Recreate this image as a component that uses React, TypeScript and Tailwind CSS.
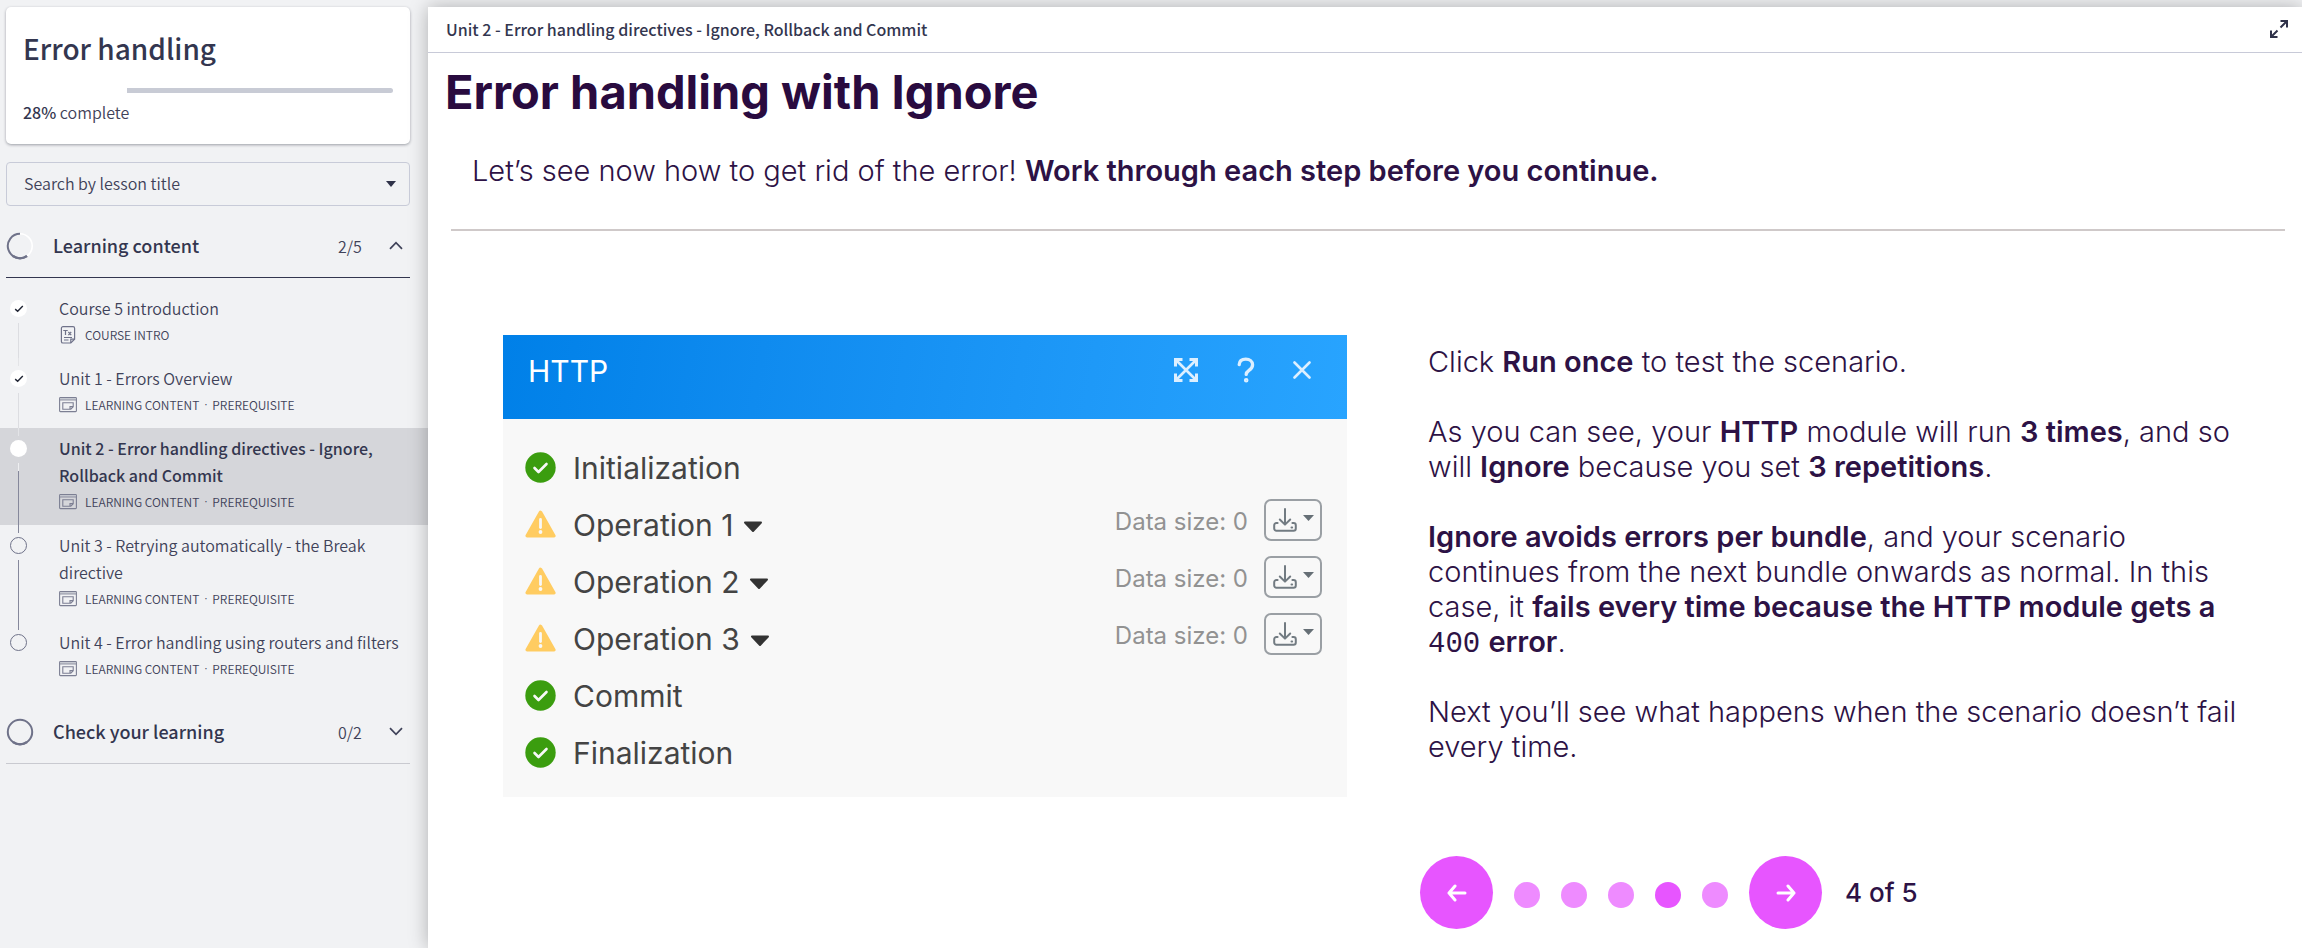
import React from "react";

type Status = "done" | "current" | "todo";

interface Lesson {
  title: string;
  meta: string[];
  icon: "text" | "content";
  status: Status;
}

const lessons: Lesson[] = [
  { title: "Course 5 introduction", meta: ["COURSE INTRO"], icon: "text", status: "done" },
  { title: "Unit 1 - Errors Overview", meta: ["LEARNING CONTENT", "PREREQUISITE"], icon: "content", status: "done" },
  {
    title: "Unit 2 - Error handling directives - Ignore, Rollback and Commit",
    meta: ["LEARNING CONTENT", "PREREQUISITE"],
    icon: "content",
    status: "current",
  },
  {
    title: "Unit 3 - Retrying automatically - the Break directive",
    meta: ["LEARNING CONTENT", "PREREQUISITE"],
    icon: "content",
    status: "todo",
  },
  {
    title: "Unit 4 - Error handling using routers and filters",
    meta: ["LEARNING CONTENT", "PREREQUISITE"],
    icon: "content",
    status: "todo",
  },
];

const operations = [
  { name: "Initialization", ok: true },
  { name: "Operation 1", ok: false },
  { name: "Operation 2", ok: false },
  { name: "Operation 3", ok: false },
  { name: "Commit", ok: true },
  { name: "Finalization", ok: true },
];

function TextIcon() {
  return (
    <svg width="18" height="20" viewBox="0 0 18 20" fill="none" stroke="#6f7289" strokeWidth="1.2">
      <path d="M4 1.6h10a1.6 1.6 0 0 1 1.6 1.6v11l-3.8 3.8H4a1.6 1.6 0 0 1-1.6-1.6V3.2A1.6 1.6 0 0 1 4 1.6Z" />
      <path d="M11.8 18v-3.800h3.800M5 12.500h8M5 15h4.500" />
      <path d="M4.300 5.500h4.400M6.500 5.500v4.500M9.400 7l2.800 3.200M12.200 7l-2.800 3.200" />
    </svg>
  );
}

function ContentIcon() {
  return (
    <svg width="18" height="16" viewBox="0 0 18 16" fill="none" stroke="#7c7f93" strokeWidth="1.100">
      <rect x="0.600" y="0.600" width="16.800" height="14" rx="0.800" />
      <path d="M1 1.200h16v1.600H1z" fill="#c4c6cf" stroke="none" />
      <path d="M1 3h16" strokeWidth="0.800" />
      <path d="M3.800 5.800h10.400v4l-2.400 2.400h-8zM11 12.200v-2.600h3.200" />
    </svg>
  );
}

function Marker({ status }: { status: Status }) {
  if (status === "todo") {
    return <span className="h-[17px] w-[17px] shrink-0 rounded-full border border-[#6f7289]" />;
  }
  return (
    <span className="flex h-[17px] w-[17px] shrink-0 items-center justify-center rounded-full bg-white">
      {status === "done" && (
        <svg width="10" height="8" viewBox="0 0 11 9" fill="none" stroke="#1f2433" strokeWidth="1.600">
          <path d="M1.200 4.600 4 7 9.800 1.200" />
        </svg>
      )}
    </span>
  );
}

function LessonRow({ lesson, index }: { lesson: Lesson; index: number }) {
  const first = index === 0;
  const last = index === lessons.length - 1;
  const current = lesson.status === "current";
  const before = first ? "bg-transparent" : lesson.status === "todo" ? "bg-[#85889b]" : "bg-[#e3e4e7]";
  const after = last ? "bg-transparent" : lesson.status === "done" ? "bg-[#dcdde1]" : "bg-[#85889b]";
  return (
    <li className={current ? "bg-[#d5d6da]" : ""}>
      <a href="#lesson" aria-current={current ? "page" : undefined} className="flex pl-[10px]">
        <span className="flex w-[17px] shrink-0 flex-col items-center">
          <span className={`mb-1 h-2 w-px shrink-0 ${before}`} />
          <Marker status={lesson.status} />
          {current && <span className="mt-[6px] h-2 w-px bg-[#eeeff1]" />}
          <span className={`w-px flex-1 ${current ? "" : "mt-[6px]"} ${after}`} />
        </span>
        <span className="ml-8 flex min-w-0 flex-1 flex-col pt-[7px] pr-6 pb-[10px]">
          <span
            className={`text-[16px] leading-[27px] ${current ? "font-medium text-[#33364f]" : "font-[350] text-[#3f4259]"}`}
          >
            {lesson.title}
          </span>
          <span className="flex h-[26px] items-center text-[12px] font-[350] text-[#3f4259]">
            <span className="flex w-[26px] shrink-0">{lesson.icon === "text" ? <TextIcon /> : <ContentIcon />}</span>
            {lesson.meta.map((part, i) => (
              <React.Fragment key={part}>
                {i > 0 && <span className="w-[13px] text-center font-['Inter',sans-serif]">·</span>}
                <span>{part}</span>
              </React.Fragment>
            ))}
          </span>
        </span>
      </a>
    </li>
  );
}

function SectionHeader({ title, count, open }: { title: string; count: string; open: boolean }) {
  return (
    <button
      type="button"
      aria-expanded={open}
      className={`mr-[18px] ml-[6px] flex h-16 items-center border-b text-left ${open ? "border-[#33364f]" : "border-[#c9cad0]"}`}
    >
      <svg width="28" height="28" viewBox="0 0 28 28" fill="none">
        <circle cx="14" cy="14" r="12.200" stroke={open ? "#ffffff" : "#6f7289"} strokeWidth={open ? 1.6 : 2} />
        {open ? <path d="M14 1.800A12.200 12.200 0 1 0 21 24" stroke="#6f7289" strokeWidth="2" /> : null}
        <path d="M7 24a12.200 12.200 0 0 0 14 0" stroke="#6f7289" strokeWidth="2.600" />
      </svg>
      <span className="ml-[19px] flex-1 text-[18px] font-medium text-[#33364f]">{title}</span>
      <span className="w-[51px] text-[16px] font-[350] text-[#3f4259]">{count}</span>
      <svg width="14" height="9" viewBox="0 0 14 9" fill="none" stroke="#3f4259" strokeWidth="1.700" className="mr-[7px]">
        <path d={open ? "M1 7.800 7 1.600l6 6.200" : "M1 1.200 7 7.400l6-6.200"} />
      </svg>
    </button>
  );
}

function Sidebar() {
  return (
    <nav className="flex w-[428px] shrink-0 flex-col pt-[7px] font-['Noto_Sans_CJK_SC','Source_Sans_3',sans-serif]">
      <section className="mr-[18px] ml-[6px] h-[137px] rounded-[5px] bg-white px-[17px] pt-5 shadow-[0_1px_3px_rgba(30,34,50,0.4)]">
        <h1 className="text-[28px] leading-[42px] font-medium text-[#33364f]">Error handling</h1>
        <div className="mt-[19px] flex h-[5px]">
          <div className="w-[28%]" />
          <div className="flex-1 rounded-r-[3px] bg-[#c8cbd5]" />
        </div>
        <p className="mt-[6px] text-[16px] leading-[27px] font-[350] text-[#3f4259]">
          <span className="font-medium text-[#33364f]">28%</span> complete
        </p>
      </section>
      <div className="relative mt-[18px] mr-[18px] ml-[6px]">
        <select
          aria-label="Search by lesson title"
          className="h-11 w-full appearance-none rounded-[4px] border border-[#c8cbd8] bg-transparent px-[17px] pb-[2px] text-[16px] font-[350] text-[#3f4259]"
        >
          <option>Search by lesson title</option>
        </select>
        <svg width="10" height="6" viewBox="0 0 10 6" className="absolute top-[19px] right-[14px]">
          <path d="M0 0h10L5 6z" fill="#2f3249" />
        </svg>
      </div>
      <div className="mt-2 flex flex-col">
        <SectionHeader title="Learning content" count="2/5" open />
        <ul className="mt-[10px] mb-2">
          {lessons.map((lesson, i) => (
            <LessonRow key={lesson.title} lesson={lesson} index={i} />
          ))}
        </ul>
        <SectionHeader title="Check your learning" count="0/2" open={false} />
      </div>
    </nav>
  );
}

function StateIcon({ ok }: { ok: boolean }) {
  return ok ? (
    <svg width="31" height="31" viewBox="0 0 31 31" fill="none">
      <circle cx="15.500" cy="15.500" r="15.200" fill="#3b9d0f" />
      <path d="M9.500 16 13.500 20 21.500 12" stroke="#f8f8f8" strokeWidth="2.600" strokeLinecap="round" strokeLinejoin="round" />
    </svg>
  ) : (
    <svg width="31" height="31" viewBox="0 0 31 31" fill="none">
      <path d="M15.500 3.500 28.800 26.800H2.200Z" fill="#ffcc61" stroke="#ffcc61" strokeWidth="3.600" strokeLinejoin="round" />
      <path d="M15.500 10.500v8" stroke="#f8f8f8" strokeWidth="2.800" strokeLinecap="round" />
      <circle cx="15.500" cy="23" r="1.900" fill="#f8f8f8" />
    </svg>
  );
}

function DownloadButton() {
  return (
    <button
      type="button"
      aria-label="Download data"
      className="flex h-[42px] w-[58px] items-center rounded-[7px] border-2 border-[#9a9fa4] pl-[7px]"
    >
      <svg width="24" height="26" viewBox="0 0 24 26" fill="none" stroke="#727b82" strokeWidth="2" strokeLinecap="round" strokeLinejoin="round">
        <path d="M12 2v15M6.800 12.500 12 17.600l5.200-5.100" />
        <path d="M4.600 16H3.400A2.200 2.200 0 0 0 1.200 18.200v3.400a2.200 2.200 0 0 0 2.200 2.200h17.200a2.200 2.200 0 0 0 2.200-2.200v-3.400a2.200 2.200 0 0 0-2.200-2.200h-1.200" />
        <path d="M18.500 20.600h.6" />
      </svg>
      <svg width="11" height="6" viewBox="0 0 11 6" className="mb-1 ml-[6px]">
        <path d="M0 0h11L5.500 6z" fill="#666f76" />
      </svg>
    </button>
  );
}

function HttpPanel() {
  return (
    <section className="flex flex-col bg-[#f8f8f8] text-[#444444]">
      <header className="flex h-21 items-start bg-linear-100 from-[#0080e8] to-[#28a4ff] px-[25px] pt-4 text-white">
        <h2 className="flex-1 text-[30px] leading-[40px]">HTTP</h2>
        <div className="flex h-[38px] items-center text-[#dcefff]">
          <button type="button" aria-label="Expand" className="mr-[38px]">
            <svg width="26" height="26" viewBox="0 0 26 26" fill="none" stroke="currentColor" strokeWidth="3">
              <path d="M2.500 9.500v-7h7M16.500 2.500h7v7M23.500 16.500v7h-7M9.500 23.500h-7v-7" />
              <path d="m3 3 20 20M23 3 3 23" strokeWidth="2.600" />
            </svg>
          </button>
          <button type="button" aria-label="Help" className="mr-[38px]">
            <svg width="18" height="26" viewBox="0 0 18 26" fill="none" stroke="currentColor" strokeWidth="3.300" strokeLinecap="round">
              <path d="M2.200 7.600C2.400 4 5 2.200 8.800 2.200c4 0 6.800 2.200 6.800 5.600 0 2.800-1.600 4.200-3.600 5.600-2 1.400-2.800 2.200-2.800 4" />
              <circle cx="9.200" cy="23.300" r="1" strokeWidth="2.600" />
            </svg>
          </button>
          <button type="button" aria-label="Close" className="mr-[11px]">
            <svg width="18" height="18" viewBox="0 0 18 18" fill="none" stroke="currentColor" strokeWidth="2.600" strokeLinecap="round">
              <path d="m1.500 1.500 15 15M16.500 1.500l-15 15" />
            </svg>
          </button>
        </div>
      </header>
      <ul className="pt-5 pr-[25px] pb-4 pl-[22px]">
        {operations.map((op) => (
          <li key={op.name} className="flex h-[57px] items-center">
            <StateIcon ok={op.ok} />
            <span className="ml-[17px] text-[30px] leading-[40px]">{op.name}</span>
            {!op.ok && (
              <>
                <svg width="20" height="12" viewBox="0 0 20 12" className="mt-1 ml-[10px]">
                  <path d="M2 1.500h16L10 10z" fill="#333333" stroke="#333333" strokeWidth="2" strokeLinejoin="round" />
                </svg>
                <span className="mb-[10px] ml-auto flex items-center gap-4">
                  <span className="mt-1 text-[24px] leading-[36px] text-[#929292]">Data size: 0</span>
                  <DownloadButton />
                </span>
              </>
            )}
          </li>
        ))}
      </ul>
    </section>
  );
}

function Arrow({ back }: { back?: boolean }) {
  return (
    <svg width="20" height="18" viewBox="0 0 20 18" fill="none" stroke="white" strokeWidth="3" strokeLinecap="round" strokeLinejoin="round">
      <path d={back ? "M18 9H2M8 2 2 9l6 7" : "M2 9h16M12 2l6 7-6 7"} />
    </svg>
  );
}

function Pager() {
  return (
    <div className="-ml-2 flex items-center">
      <button
        type="button"
        aria-label="Previous step"
        className="flex h-[73px] w-[73px] items-center justify-center rounded-full bg-[#e755ff]"
      >
        <Arrow back />
      </button>
      <div className="mx-[21px] flex gap-[21px] pt-1">
        {[1, 2, 3, 4, 5].map((n) => (
          <button
            key={n}
            type="button"
            aria-label={`Step ${n}`}
            className={`h-[26px] w-[26px] rounded-full ${n === 4 ? "bg-[#e755ff]" : "bg-[#ee8bff]"}`}
          />
        ))}
      </div>
      <button
        type="button"
        aria-label="Next step"
        className="flex h-[73px] w-[73px] items-center justify-center rounded-full bg-[#e755ff]"
      >
        <Arrow />
      </button>
      <span className="ml-[23px] text-[26px] font-medium">4 of 5</span>
    </div>
  );
}

export default function App() {
  return (
    <div className="flex min-h-screen bg-[#f1f2f4]">
      <Sidebar />
      <div className="flex min-w-0 flex-1 flex-col pt-[7px]">
        <main className="flex flex-1 flex-col bg-white font-['Inter',sans-serif] text-[#2d1245] shadow-[0_0_18px_rgba(0,0,0,0.28)]">
          <header className="flex h-[46px] items-center justify-between border-b border-[#c8cad8] pr-[14px] pb-[2px] pl-[18px] font-['Noto_Sans_CJK_SC',sans-serif]">
            <span className="text-[16px] font-medium text-[#33364f]">
              Unit 2 - Error handling directives - Ignore, Rollback and Commit
            </span>
            <button type="button" aria-label="Full screen">
              <svg width="18" height="18" viewBox="0 0 18 18" fill="none" stroke="#2f3249" strokeWidth="2">
                <path d="M10.500 1H17v6.500M17 1l-6.500 6.500M1 10.500V17h6.500M1 17l6.500-6.500" />
              </svg>
            </button>
          </header>
          <h2 className="mt-[9px] pl-[17px] text-[47px] leading-[60px] font-bold text-[#290b3f]">
            Error handling with Ignore
          </h2>
          <p className="mt-[29px] pl-11 text-[29px] leading-[40px] font-light">
            Let’s see now how to get rid of the error!{" "}
            <strong className="font-semibold">Work through each step before you continue.</strong>
          </p>
          <hr className="mt-[38px] mr-[17px] ml-[23px] border-t-2 border-[#cfc9c9]" />
          <div className="mt-[104px] grid grid-cols-[844fr_822fr] items-start gap-[81px] pr-[52px] pl-[75px]">
            <HttpPanel />
            <div className="flex flex-col">
              <div className="flex flex-col gap-[35px] pt-[9px] text-[29px] leading-[35px] font-light [&_strong]:font-semibold">
                <p>
                  Click <strong>Run once</strong> to test the scenario.
                </p>
                <p>
                  As you can see, your <strong>HTTP</strong> module will run <strong>3 times</strong>, and so will{" "}
                  <strong>Ignore</strong> because you set <strong>3 repetitions</strong>.
                </p>
                <p>
                  <strong>Ignore avoids errors per bundle</strong>, and your scenario continues from the next bundle
                  onwards as normal. In this case, it{" "}
                  <strong>fails every time because the HTTP module gets a</strong>{" "}
                  <code className="font-['Liberation_Mono',monospace] leading-none">400</code> <strong>error</strong>.
                </p>
                <p>Next you’ll see what happens when the scenario doesn’t fail every time.</p>
              </div>
              <div className="mt-[92px]">
                <Pager />
              </div>
            </div>
          </div>
        </main>
      </div>
    </div>
  );
}
